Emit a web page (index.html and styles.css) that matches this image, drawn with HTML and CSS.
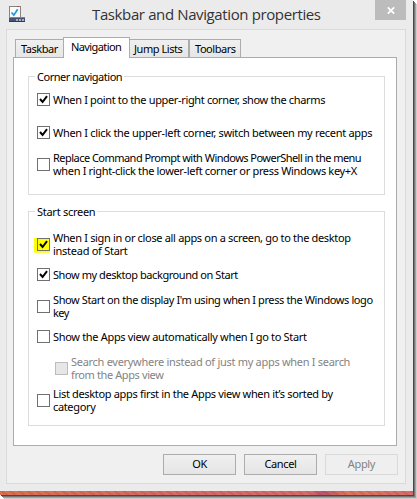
FILE: index.html
```html
<!DOCTYPE html>
<html lang="en">
<head>
  <meta charset="UTF-8" />
  <meta name="viewport" content="width=device-width, initial-scale=1.0"/>
  <title>Taskbar and Navigation properties</title>
  <link rel="stylesheet" href="styles.css">
</head>
<body>

<div class="screen">
<div class="window">
  <div class="titlebar">
    <svg class="app-icon" width="16" height="16" viewBox="0 0 16 16">
      <rect x="0.5" y="0.5" width="11" height="11" fill="#fafafa" stroke="#858585"/>
      <path d="M8 0.5h2" stroke="#b5483c"/>
      <path d="M2.5 6.5l2.3 2.6L8.7 3.3" fill="none" stroke="#2b95d2" stroke-width="1.7"/>
      <rect x="0" y="11" width="16" height="5" fill="#465575"/>
      <path d="M0 11.5h16" stroke="#76839c"/>
      <path d="M0 15.5h16" stroke="#303b58"/>
      <path d="M7 13h2v2h-2zM10 13h2v2h-2zM13 13h2v2h-2z" fill="#a5afc1"/>
    </svg>
    <h1 class="title">Taskbar and Navigation properties</h1>
    <div class="close">
      <svg width="8" height="7" viewBox="0 0 8 7"><path d="M0.8 0.3l6.4 6.4M7.2 0.3L0.8 6.7" stroke="#fff" stroke-width="1.7"/></svg>
    </div>
  </div>

  <div class="client">
    <div class="tabs">
      <div class="tab tab-taskbar">Taskbar</div>
      <div class="tab tab-nav active">Navigation</div>
      <div class="tab tab-jump">Jump Lists</div>
      <div class="tab tab-tools">Toolbars</div>
    </div>

    <div class="page">
      <div class="group corner">
        <div class="legend"><span class="corner-title">Corner navigation</span></div>
        <div class="option">
          <span class="box"><svg width="11" height="11" viewBox="0 0 11 11"><path d="M2 5l2.6 3L9 2.2" /></svg></span>
          <div class="text"><span class="l1">When I point to the upper-right corner, show the charms</span></div>
        </div>
        <div class="option gap-20">
          <span class="box"><svg width="11" height="11" viewBox="0 0 11 11"><path d="M2 5l2.6 3L9 2.2" /></svg></span>
          <div class="text"><span class="l2">When I click the upper-left corner, switch between my recent apps</span></div>
        </div>
        <div class="option gap-12">
          <span class="box"></span>
          <div class="text"><span class="l3">Replace Command Prompt with Windows PowerShell in the menu</span><span class="l4">when I right-click the lower-left corner or press Windows key+X</span></div>
        </div>
      </div>

      <div class="group start">
        <div class="legend"><span class="start-title">Start screen</span></div>
        <div class="option">
          <span class="box marked"><svg width="11" height="11" viewBox="0 0 11 11"><path d="M2 5l2.6 3L9 2.2" /></svg></span>
          <div class="text"><span class="l5">When I sign in or close all apps on a screen, go to the desktop</span><span class="l6">instead of Start</span></div>
        </div>
        <div class="option gap-11">
          <span class="box"><svg width="11" height="11" viewBox="0 0 11 11"><path d="M2 5l2.6 3L9 2.2" /></svg></span>
          <div class="text"><span class="l7">Show my desktop background on Start</span></div>
        </div>
        <div class="option gap-12">
          <span class="box"></span>
          <div class="text"><span class="l8">Show Start on the display I'm using when I press the Windows logo</span><span class="l9">key</span></div>
        </div>
        <div class="option gap-11">
          <span class="box"></span>
          <div class="text"><span class="l10">Show the Apps view automatically when I go to Start</span></div>
        </div>
        <div class="option gap-12 disabled">
          <span class="box"></span>
          <div class="text"><span class="l11">Search everywhere instead of just my apps when I search</span><span class="l12">from the Apps view</span></div>
        </div>
        <div class="option gap-6">
          <span class="box"></span>
          <div class="text"><span class="l13">List desktop apps first in the Apps view when it’s sorted by</span><span class="l14">category</span></div>
        </div>
      </div>
    </div>

    <div class="buttons">
      <div class="button">OK</div>
      <div class="button">Cancel</div>
      <div class="button off">Apply</div>
    </div>
  </div>
</div>
<div class="desktop"></div>
</div>

</body>
</html>
```
FILE: styles.css
```css
* {
  box-sizing: border-box;
}
body {
  margin: 0;
  width: 417px;
  height: 499px;
  overflow: hidden;
  background: #fff;
  font-family: "Noto Sans", sans-serif;
  font-size: 11px;
  line-height: 13px;
  letter-spacing: -0.35px;
  color: #000;
}
.screen {
  width: 413px;
  height: 495px;
  box-shadow: 1px 1px 0 #484848, 2px 2px 0 #777, 3px 3px 0 #a2a2a2, 4px 4px 0 #cdcdcd;
}
.window {
  height: 491px;
  padding: 0 7px 7px 6px;
  background: #ebebeb;
}
.desktop {
  height: 4px;
  background: repeating-linear-gradient(35deg, transparent 0 3px, rgba(150,50,40,0.18) 3px 5px), linear-gradient(90deg, #dc7050, #d66a68 45%, #d86c6a 75%, #b9536a 78%, #df755c 84%, #d86c6c);
}
.titlebar {
  display: flex;
  height: 29px;
}
.app-icon {
  margin: 6px 0 0 3px;
}
.title {
  margin: 4px 0 0 67px;
  font-family: "Open Sans", sans-serif;
  font-size: 15px;
  font-weight: normal;
  line-height: 21px;
  letter-spacing: -0.38px;
  color: #333;
  white-space: nowrap;
  width: 230px;
}
.close {
  display: flex;
  align-items: center;
  justify-content: center;
  width: 31px;
  height: 20px;
  margin-left: auto;
  background: #bcbcbc;
}
.client {
  height: 455px;
  padding: 7px 7px 0 6px;
  border: 1px solid #dadada;
  background: #f0f0f0;
}
.tabs {
  display: flex;
  align-items: flex-end;
  height: 21px;
  padding-left: 2px;
  margin-bottom: -1px;
  position: relative;
}
.tab {
  height: 18px;
  margin-bottom: 1px;
  padding: 2px 0 0 5px;
  border: 1px solid #acacac;
  border-bottom: 0;
  background: linear-gradient(#f0f0f0, #e6e6e6);
  letter-spacing: -0.45px;
  white-space: nowrap;
}
.tab.active {
  height: 21px;
  margin-bottom: 0;
  padding-left: 7px;
  background: #fff;
  letter-spacing: -0.6px;
}
.tab-taskbar {
  width: 48px;
  border-right: 0;
}
.tab-nav {
  width: 67px;
}
.tab-jump {
  width: 59px;
  padding-left: 4px;
  border-left: 0;
}
.tab-tools {
  width: 52px;
}
.page {
  height: 389px;
  width: 384px;
  padding: 18px 11px 0 14px;
  border: 1px solid #acacac;
  background: #fff;
}
.group {
  width: 357px;
  padding-left: 8px;
  border: 1px solid #dcdcdc;
}
.corner {
  height: 119px;
}
.start {
  height: 215px;
  margin-top: 16px;
}
.legend {
  margin-top: -7px;
}
.start .legend {
  height: 26px;
}
.corner .legend {
  height: 23px;
}
.legend span {
  display: block;
  width: fit-content;
  margin-left: -2px;
  padding: 0 2px;
  background: #fff;
  white-space: nowrap;
}
.option {
  display: flex;
  align-items: center;
  gap: 3px;
}
.gap-6 {
  margin-top: 6px;
}
.gap-11 {
  margin-top: 11px;
}
.gap-12 {
  margin-top: 12px;
}
.gap-20 {
  margin-top: 20px;
}
.box {
  flex: none;
  width: 13px;
  height: 13px;
  border: 1px solid #707070;
  background: #fff;
}
.box svg {
  display: block;
}
.box path {
  fill: none;
  stroke: #000;
  stroke-width: 2;
}
.marked {
  background: #ff0;
  box-shadow: -1px 1px 0 1px #ff0, -2px 1px 0 1px #ff0;
  clip-path: inset(0 0 -2px -3px);
}
.text span {
  display: block;
  white-space: nowrap;
}

/* tracking per line, keeps the dialog's text widths */
.corner-title {
  letter-spacing: -0.47px;
}
.start-title {
  letter-spacing: -0.27px;
}
.l2 {
  letter-spacing: -0.31px;
}
.l3 {
  letter-spacing: -0.53px;
}
.l4, .l5, .l13 {
  letter-spacing: -0.33px;
}
.l6 {
  letter-spacing: -0.27px;
}
.l7 {
  letter-spacing: -0.43px;
}
.l8, .l12 {
  letter-spacing: -0.39px;
}
.l9 {
  letter-spacing: -0.5px;
}
.l10 {
  letter-spacing: -0.32px;
}
.l11 {
  letter-spacing: -0.29px;
}

.disabled {
  padding-left: 18px;
  color: #838383;
}
.disabled .box {
  border-color: #bcbcbc;
  background: #e6e6e6;
}
.buttons {
  display: flex;
  justify-content: flex-end;
  gap: 8px;
  margin-top: 8px;
}
.button {
  width: 73px;
  height: 21px;
  border: 1px solid #acacac;
  background: linear-gradient(#f0f0f0, #e5e5e5);
  line-height: 17px;
  text-align: center;
}
.button.off {
  border-color: #d9d9d9;
  background: #efefef;
  color: #838383;
}
```
